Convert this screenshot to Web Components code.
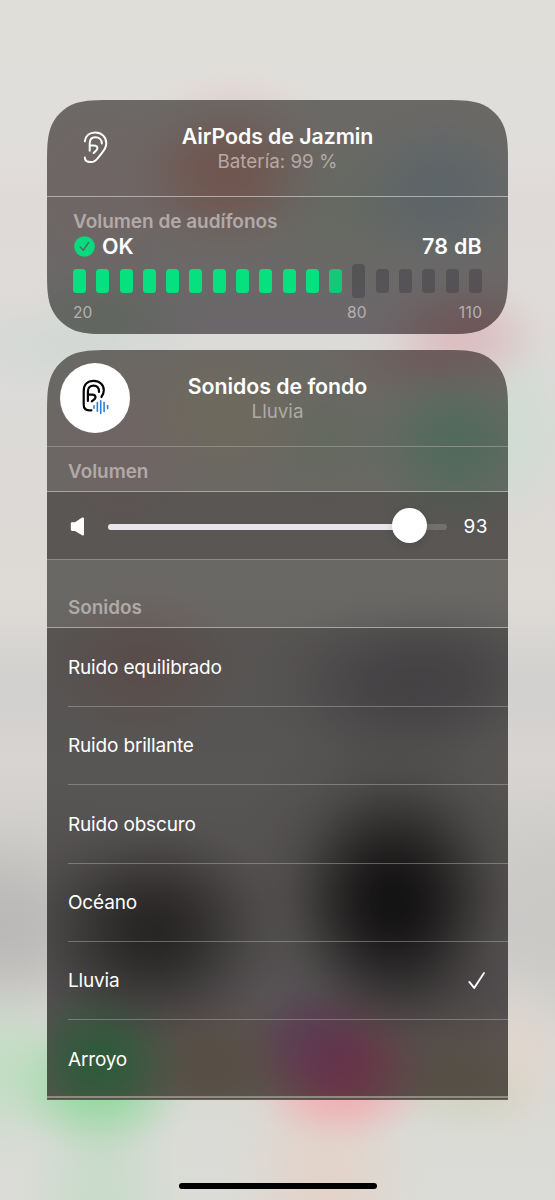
<!DOCTYPE html>
<html lang="es">
<head>
<meta charset="utf-8">
<meta name="viewport" content="width=device-width">
<title>Audición</title>
<style>
html,body{margin:0;height:1200px;overflow:hidden;font-family:Inter,"Liberation Sans",sans-serif}
</style>
</head>
<body>
<hearing-screen></hearing-screen>
<script>
const define = (name, html, setup) => customElements.define(name, class extends HTMLElement {
  constructor() {
    super();
    this.attachShadow({ mode: 'open' }).innerHTML = html;
  }
  connectedCallback() { if (setup) setup(this, this.shadowRoot); }
});

define('ear-icon', `<style>:host{display:block;width:26px;height:34px}svg{display:block}</style>
<svg width="26" height="34" viewBox="83 131 26 34" fill="none" stroke="#fff" stroke-width="2" stroke-linecap="round" stroke-linejoin="round">
<path d="M84.8 141.3C85.4 135.8 89.7 132.5 95.2 132.5C101.8 132.5 106.3 137.2 106.3 143.2C106.3 148.8 102.8 151.8 100 155.3C97.4 158.6 95.9 162.1 90.9 162.1C87.2 162.1 84.8 160.3 84.8 157.6"/>
<path d="M89.7 150.8V143.6C89.7 139.6 92 137.3 95.3 137.3C99.3 137.3 101.8 139.8 101.8 143.4M89.9 145.6H93.7C96.6 145.6 98 147 97.2 149C96.6 150.6 95.2 151.4 93.6 153"/>
</svg>`);

define('background-sounds-icon', `<style>:host{display:grid;place-items:center;width:70px;height:70px;border-radius:50%;background:#fff}svg{display:block}</style>
<svg width="70" height="70" viewBox="60 363 70 70" fill="none" stroke="#050505" stroke-width="2.2" stroke-linecap="round" stroke-linejoin="round">
<path d="M91.4 410.3H89.5C85.6 410.3 83.7 408.6 83.7 404.8V390.8C83.7 384.5 87.5 380.9 93.6 380.9C99.6 380.9 103.8 384.8 103.8 390.2C103.8 393 103 395 101.4 397"/>
<path d="M87.9 401V391.2C87.9 387.8 90.2 385.6 93.5 385.6C97.2 385.6 99.3 388 99 392M88.1 394.7H91.8C95.2 394.7 96.1 396.2 95.2 398.2C94.6 399.5 93.2 400.2 91.8 401.4"/>
<path stroke="#2b7de0" stroke-width="1.6" d="M94 405.8V408.3M97.35 402.6V411.2M100.7 400.8V413.4M104.1 402.6V411.6M107.6 405.6V408.6"/>
</svg>`);

define('glass-card', `<style>
:host{display:block;width:461px;position:relative;overflow:hidden;color:#fff}
</style><slot></slot>`);

define('card-header', `<style>
:host{display:grid;grid-template-columns:1fr auto 1fr;height:97px;box-sizing:border-box;border-bottom:1px solid var(--line,#aaa8a3)}
.t{text-align:center;padding-top:23px}
h2{margin:0;font-size:21.3px;line-height:27px;font-weight:600;letter-spacing:var(--title-ls,0)}
p{margin:1px 0 0;font-size:18.8px;line-height:22px;font-weight:400;color:var(--sub,#b5aaa5);letter-spacing:var(--sub-ls,0)}
.i{padding:var(--icon-pad)}
</style><div class="i"><slot name="icon"></slot></div><div class="t"><h2><slot></slot></h2><p><slot name="sub"></slot></p></div><div></div>`);

define('level-meter', `<style>
:host{display:block;padding:13px 26px 0}
h3{margin:0;font-size:19px;line-height:24px;font-weight:600;color:#b2aaa8;letter-spacing:-.03px}
.row{display:flex;align-items:center;height:24px;padding-bottom:2px;font-size:21.5px;font-weight:600}
.row svg{margin:0 7px 0 1px}
.db{margin-left:auto;letter-spacing:.25px}
.bars{display:flex;justify-content:space-between;align-items:center;height:34px;margin-top:4px}
.bars i{width:13px;height:24px;border-radius:3.5px;background:rgba(64,64,67,.5)}
.bars i.on{background:#06e07f}.bars i.last{background:#13c977}.bars i.mark{height:34px}
.scale{display:grid;grid-template-columns:274px auto 1fr;margin-top:5px;font-size:15.6px;line-height:20px;color:#b5b0af}
.scale span:last-child{text-align:right;letter-spacing:.4px;margin-right:-.4px}
</style>
<h3><slot></slot></h3>
<div class="row"><svg width="21" height="21" viewBox="0 0 21 21"><circle cx="10.5" cy="10.5" r="10.3" fill="#06dc7e"/><path d="M6.3 11.1L9.3 14.3L14.5 6.6" fill="none" stroke="#58645d" stroke-width="1.5" stroke-linecap="round" stroke-linejoin="round"/></svg><span>OK</span><span class="db">78 dB</span></div>
<div class="bars"></div>
<div class="scale"><span>20</span><span>80</span><span>110</span></div>`, (el, root) => {
  root.querySelector('.bars').innerHTML = Array.from({ length: 18 }, (_, n) =>
    `<i class="${n < 11 ? 'on' : n === 11 ? 'last' : n === 12 ? 'mark' : ''}"></i>`).join('');
});

define('section-title', `<style>
:host{display:flex;align-items:flex-end;box-sizing:border-box;padding:0 21px 7px;font-size:18.9px;line-height:24px;font-weight:600;color:#b0aaa7;border-bottom:1px solid #a5a6a1}
</style><slot></slot>`);

define('volume-slider', `<style>
:host{display:flex;align-items:center;height:68px;box-sizing:border-box;background:rgba(52,50,48,.31);border-bottom:1px solid #8b8a88;padding:2px 20px 0 23px}
svg{display:block;flex:none}
.track{width:339px;height:6px;border-radius:3px;margin-left:23px;background:#73716f;display:flex;align-items:center;flex:none}
.fill{width:301px;height:6px;border-radius:3px;background:#e9e5ec;display:flex;align-items:center;justify-content:flex-end}
.knob{width:35px;height:35px;border-radius:50%;background:#fff;flex:none;margin-right:-17.8px;box-shadow:0 2px 8px #0002;transform:translateY(-1px)}
span{margin-left:auto;font-size:19px;letter-spacing:.5px}
</style><svg width="15" height="20" viewBox="0 0 15 20"><path d="M2 5.2H5L12.1.6Q14 .1 14 1.8V17.2Q14 19.3 12.1 18.2L5 13.9H2.2Q.8 13.9.8 12.5V6.5Q.8 5.2 2 5.2Z" fill="#fff"/></svg>
<div class="track"><div class="fill"><div class="knob"></div></div></div><span><slot></slot></span>`);

define('sound-row', `<style>
:host{display:block;padding-left:21px}
div{box-sizing:border-box;height:78.35px;border-bottom:1px solid rgba(180,182,175,.45);display:flex;align-items:center;justify-content:space-between;font-size:19px;letter-spacing:-.17px;padding:1.4px 21px 0 0;line-height:24px}
:host([last]) div{border-color:transparent}
:host(:not([checked])) svg{display:none}
</style><div><slot></slot><svg width="20" height="20" viewBox="0 0 20 20"><path d="M2.3 10.9L7.2 16.9L17 2.1" fill="none" stroke="#fff" stroke-width="1.9" stroke-linecap="round" stroke-linejoin="round"/></svg></div>`);

define('sound-list', `<style>
:host{display:block;background:rgba(52,50,48,.31);height:471px;box-sizing:border-box;padding-top:.7px;box-shadow:inset 0 -1px #55504a,inset 0 -3px #8f8b80}
</style><slot></slot>`);

define('home-indicator', `<style>:host{display:block;width:198px;height:6px;border-radius:3px;background:#000}</style>`);

define('hearing-screen', `<style>
:host{display:flex;flex-direction:column;align-items:center;box-sizing:border-box;width:555px;height:1200px;padding-top:100px;position:relative}
.one{height:234px;--title-ls:-.06px;--icon-pad:31px 0 0 36px;--line:#b0aeaa}
.two{height:750px;margin-top:16px;--title-ls:-.03px;--sub:#aeaba6;--line:#8c8a86;--icon-pad:13px 0 0 13px}
.v{height:45px}.s{height:68px}
home-indicator{margin-top:83px}
</style>
<glass-card class="one"><card-header><ear-icon slot="icon"></ear-icon>AirPods de Jazmin<span slot="sub">Batería: 99 %</span></card-header><level-meter>Volumen de audífonos</level-meter></glass-card>
<glass-card class="two"><card-header><background-sounds-icon slot="icon"></background-sounds-icon>Sonidos de fondo<span slot="sub">Lluvia</span></card-header>
<section-title class="v">Volumen</section-title>
<volume-slider>93</volume-slider>
<section-title class="s">Sonidos</section-title>
<sound-list>
<sound-row>Ruido equilibrado</sound-row><sound-row>Ruido brillante</sound-row><sound-row>Ruido obscuro</sound-row><sound-row>Océano</sound-row><sound-row checked>Lluvia</sound-row><sound-row last>Arroyo</sound-row>
</sound-list></glass-card>
<home-indicator></home-indicator>`, (el, root) => {
  const one = root.querySelector('.one'), two = root.querySelector('.two');

  // Soft colour spots with a cosine falloff: x, y, radius x, radius y, rgb, opacity.
  const blob = ([x, y, rx, ry, rgb, alpha = 1]) => {
    const stops = Array.from({ length: 11 }, (_, n) =>
      `rgba(${rgb},${(alpha * (1 + Math.cos(Math.PI * n / 10)) / 2).toFixed(3)}) ${n * 10}%`);
    return `radial-gradient(ellipse ${rx}px ${ry}px at ${x}px ${y}px,${stops})`;
  };
  const paint = (node, blobs, base) => {
    node.style.background = [...blobs.map(blob), base].join(',');
  };

  paint(el, [
    [235, 115, 100, 50, '226,198,193', .5],
    [462, 338, 100, 68, '219,178,182', .7],
    [75, 342, 150, 60, '205,214,210', .6],
    [500, 435, 95, 115, '203,220,209', .75],
    [100, 1085, 105, 80, '145,216,156', .9],
    [342, 1088, 105, 66, '243,168,174', .85],
    [465, 1095, 100, 50, '205,209,186', .6],
    [512, 1055, 70, 95, '226,213,202', .7],
    [100, 1200, 90, 280, '194,218,197', .7],
    [325, 1200, 105, 260, '230,207,196', .7],
    [0, 1070, 140, 95, '192,222,195', .9],
    [0, 925, 150, 120, '182,181,179', .8],
    [555, 920, 90, 140, '200,199,196', .5]
  ], 'linear-gradient(180deg,#dfded9 0,#e0dedb 140px,#dfdad8 200px,#dedbd8 300px,#dbdbd9 370px,#ddd9d6 520px,#dedbd7 600px,#d1d0ce 685px,#d8d4d2 760px,#cfcecb 840px,#cac9c7 930px,#d3d2cf 990px,#d9d7d3 1040px,#dadbd6 1130px,#dbdcd7 1200px)');

  paint(one, [
    [180, 72, 115, 95, '114,78,70', .72],
    [395, 92, 115, 100, '88,99,104', .72],
    [300, 105, 120, 95, '98,104,95', .6],
    [55, 218, 120, 65, '93,101,92', .7],
    [425, 234, 120, 70, '110,82,84', .75],
    [55, 90, 110, 120, '114,98,100', .6]
  ], 'linear-gradient(180deg,#6b6966,#6b6967 60%,#6b676a)');

  paint(two, [
    [410, 95, 110, 95, '77,107,89', .8],
    [175, 62, 115, 95, '112,106,91', .75],
    [280, 90, 85, 75, '94,105,88', .5],
    [395, 0, 130, 65, '110,87,87', .7],
    [75, 105, 105, 110, '114,98,100', .7],
    [95, 315, 115, 90, '108,83,80', .6],
    [340, 335, 140, 95, '65,63,68', .6],
    [410, 330, 120, 95, '65,63,68', .48],
    [347, 552, 120, 140, '0,0,0', .9],
    [350, 535, 170, 200, '28,26,25', .4],
    [108, 582, 140, 125, '18,16,15', .78],
    [400, 645, 140, 70, '74,66,67', .35],
    [53, 713, 100, 95, '37,110,59', .88],
    [262, 688, 75, 65, '102,54,108', .42],
    [295, 718, 105, 95, '132,46,78', .84],
    [165, 710, 115, 80, '100,86,68', .65],
    [410, 725, 120, 75, '94,88,68', .6],
    [20, 600, 110, 170, '82,80,80', .5]
  ], 'linear-gradient(180deg,#6a6864 0,#6a6865 230px,#676563 300px,#686765 430px,#625f5e 550px,#676365 640px,#6f6663 700px,#6d675d 750px)');

  // Continuous-curvature corners, drawn clockwise from the top edge.
  const card = (h, all) => {
    const w = 461, r = 45, a = 1.5287 * r, b = 1.0885 * r, c = .8684 * r, d = .6315 * r, e = .0749 * r, f = .3728 * r, g = .1691 * r;
    const top = `M${a} 0H${w - a}C${w - b} 0 ${w - c} 0 ${w - d} ${e}C${w - f} ${g} ${w - g} ${f} ${w - e} ${d}C${w} ${c} ${w} ${b} ${w} ${a}`;
    const bottom = all
      ? `V${h - a}C${w} ${h - b} ${w} ${h - c} ${w - e} ${h - d}C${w - g} ${h - f} ${w - f} ${h - g} ${w - d} ${h - e}C${w - c} ${h} ${w - b} ${h} ${w - a} ${h}H${a}C${b} ${h} ${c} ${h} ${d} ${h - e}C${f} ${h - g} ${g} ${h - f} ${e} ${h - d}C0 ${h - c} 0 ${h - b} 0 ${h - a}`
      : `V${h}H0`;
    return `path("${top}${bottom}V${a}C0 ${b} 0 ${c} ${e} ${d}C${g} ${f} ${f} ${g} ${d} ${e}C${c} 0 ${b} 0 ${a} 0Z")`;
  };
  one.style.clipPath = card(234, true);
  two.style.clipPath = card(750, false);
});
</script>
</body>
</html>
